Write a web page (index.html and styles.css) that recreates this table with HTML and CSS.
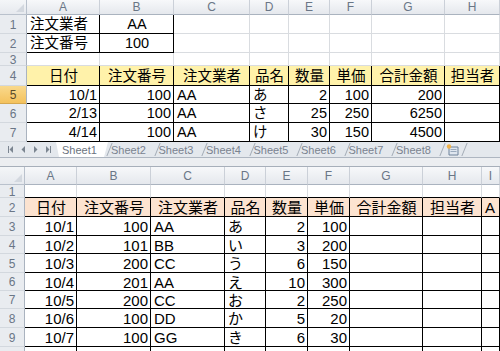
FILE: index.html
```html
<!DOCTYPE html>
<html lang="ja">
<head>
<meta charset="utf-8">
<title>Excel sheets</title>
<link rel="stylesheet" href="styles.css">
</head>
<body>
<div class="sheet top">
  <div class="corner"></div><div class="ch">A</div><div class="ch">B</div><div class="ch">C</div><div class="ch">D</div><div class="ch">E</div><div class="ch">F</div><div class="ch">G</div><div class="ch">H</div>

  <div class="rh">1</div><div class="c k">注文業者</div><div class="c k m">AA</div><div class="c"></div><div class="c"></div><div class="c"></div><div class="c"></div><div class="c"></div><div class="c"></div>

  <div class="rh">2</div><div class="c k">注文番号</div><div class="c k m">100</div><div class="c"></div><div class="c"></div><div class="c"></div><div class="c"></div><div class="c"></div><div class="c"></div>

  <div class="rh">3</div><div class="c"></div><div class="c"></div><div class="c"></div><div class="c"></div><div class="c"></div><div class="c"></div><div class="c"></div><div class="c"></div>

  <div class="rh">4</div><div class="c k y m">日付</div><div class="c k y m">注文番号</div><div class="c k y m">注文業者</div><div class="c k y m">品名</div><div class="c k y m">数量</div><div class="c k y m">単価</div><div class="c k y m">合計金額</div><div class="c k y m">担当者</div>

  <div class="rh sel">5</div><div class="c k r">10/1</div><div class="c k r">100</div><div class="c k">AA</div><div class="c k">あ</div><div class="c k r">2</div><div class="c k r">100</div><div class="c k r">200</div><div class="c k"></div>

  <div class="rh">6</div><div class="c k r">2/13</div><div class="c k r">100</div><div class="c k">AA</div><div class="c k">さ</div><div class="c k r">25</div><div class="c k r">250</div><div class="c k r">6250</div><div class="c k"></div>

  <div class="rh">7</div><div class="c k r">4/14</div><div class="c k r">100</div><div class="c k">AA</div><div class="c k">け</div><div class="c k r">30</div><div class="c k r">150</div><div class="c k r">4500</div><div class="c k"></div>
</div>

<div class="tabbar">
  <div class="nav">
    <svg width="56" height="15" viewBox="0 0 56 15">
      <g fill="#7b8591">
        <rect x="8" y="4" width="1" height="7"/>
        <path d="M13 4 L9.5 7.5 L13 11 Z"/>
        <path d="M25 4 L21.5 7.5 L25 11 Z"/>
        <path d="M34 4 L37.5 7.5 L34 11 Z"/>
        <path d="M46 4 L49.5 7.5 L46 11 Z"/>
        <rect x="50" y="4" width="1" height="7"/>
      </g>
    </svg>
  </div>
  <div class="tab active">Sheet1</div>
  <div class="tab">Sheet2</div>
  <div class="tab">Sheet3</div>
  <div class="tab">Sheet4</div>
  <div class="tab">Sheet5</div>
  <div class="tab">Sheet6</div>
  <div class="tab">Sheet7</div>
  <div class="tab">Sheet8</div>
  <div class="tab newtab">
    <svg width="14" height="12" viewBox="0 0 14 12">
      <path d="M3 3 H12 V11 H3 Z" fill="#dfe6ef" stroke="#6f829a" stroke-width="1"/>
      <path d="M4.5 5.5 H10.5 M4.5 7.5 H10.5" stroke="#9aaabd" stroke-width="1"/>
      <circle cx="3" cy="2.5" r="2.2" fill="#f0b24a"/>
    </svg>
  </div>
  <div class="tab endtab"></div>
</div>

<div class="gap"></div>

<div class="sheet bottom">
  <div class="corner"></div><div class="ch">A</div><div class="ch">B</div><div class="ch">C</div><div class="ch">D</div><div class="ch">E</div><div class="ch">F</div><div class="ch">G</div><div class="ch">H</div><div class="ch">I</div>

  <div class="rh">1</div><div class="c kb"></div><div class="c kb"></div><div class="c kb"></div><div class="c kb"></div><div class="c kb"></div><div class="c kb"></div><div class="c kb"></div><div class="c kb"></div><div class="c kb"></div>

  <div class="rh">2</div><div class="c k p m">日付</div><div class="c k p m">注文番号</div><div class="c k p m">注文業者</div><div class="c k p m">品名</div><div class="c k p m">数量</div><div class="c k p m">単価</div><div class="c k p m">合計金額</div><div class="c k p m">担当者</div><div class="c k p">A</div>

  <div class="rh">3</div><div class="c k r">10/1</div><div class="c k r">100</div><div class="c k">AA</div><div class="c k">あ</div><div class="c k r">2</div><div class="c k r">100</div><div class="c k"></div><div class="c k"></div><div class="c k"></div>

  <div class="rh">4</div><div class="c k r">10/2</div><div class="c k r">101</div><div class="c k">BB</div><div class="c k">い</div><div class="c k r">3</div><div class="c k r">200</div><div class="c k"></div><div class="c k"></div><div class="c k"></div>

  <div class="rh">5</div><div class="c k r">10/3</div><div class="c k r">200</div><div class="c k">CC</div><div class="c k">う</div><div class="c k r">6</div><div class="c k r">150</div><div class="c k"></div><div class="c k"></div><div class="c k"></div>

  <div class="rh">6</div><div class="c k r">10/4</div><div class="c k r">201</div><div class="c k">AA</div><div class="c k">え</div><div class="c k r">10</div><div class="c k r">300</div><div class="c k"></div><div class="c k"></div><div class="c k"></div>

  <div class="rh">7</div><div class="c k r">10/5</div><div class="c k r">200</div><div class="c k">CC</div><div class="c k">お</div><div class="c k r">2</div><div class="c k r">250</div><div class="c k"></div><div class="c k"></div><div class="c k"></div>

  <div class="rh">8</div><div class="c k r">10/6</div><div class="c k r">100</div><div class="c k">DD</div><div class="c k">か</div><div class="c k r">5</div><div class="c k r">20</div><div class="c k"></div><div class="c k"></div><div class="c k"></div>

  <div class="rh">9</div><div class="c k r">10/7</div><div class="c k r">100</div><div class="c k">GG</div><div class="c k">き</div><div class="c k r">6</div><div class="c k r">30</div><div class="c k"></div><div class="c k"></div><div class="c k"></div>

  <div class="rh"></div><div class="c k"></div><div class="c k"></div><div class="c k"></div><div class="c k"></div><div class="c k"></div><div class="c k"></div><div class="c k"></div><div class="c k"></div><div class="c k"></div>
</div>
</body>
</html>
```

FILE: styles.css
```css
html, body {
  margin: 0;
  padding: 0;
  background: #ffffff;
}
body {
  width: 500px;
  height: 351px;
  overflow: hidden;
  font-family: "Liberation Sans", "Noto Sans CJK JP", sans-serif;
  color: #000;
}

.sheet {
  display: grid;
  width: 500px;
  overflow: hidden;
}
.sheet > div {
  box-sizing: border-box;
  min-width: 0;
  overflow: hidden;
  white-space: nowrap;
}
.top {
  grid-template-columns: 27px 73px 74px 76px 39px 41px 42px 73px 55px;
  grid-template-rows: 15px 19px 19px 13px 20px 18px 19px 19px;
  font-size: 14.5px;
}
.bottom {
  grid-template-columns: 25px 52px 74px 74px 41px 42px 42px 73px 59px 18px;
  grid-template-rows: 18px 13px 19px 19px 18px 19px 18px 18px 19px 19px 20px;
  font-size: 15px;
  height: 184px;
}

.corner {
  background: linear-gradient(#f4f6f8, #e6e9ee);
  border-right: 1px solid #b9c1cc;
  border-bottom: 1px solid #b9c1cc;
  position: relative;
}
.corner::after {
  content: "";
  position: absolute;
  right: 2px;
  bottom: 2px;
  width: 0;
  height: 0;
  border-left: 8px solid transparent;
  border-bottom: 8px solid #d3d8df;
}

.ch {
  background: linear-gradient(#f7f8fa, #e5e8ed);
  border-right: 1px solid #cbd0d8;
  border-bottom: 1px solid #aab3bf;
  color: #6a7686;
  font-size: 12px;
  display: flex;
  align-items: center;
  justify-content: center;
}
.rh {
  background: #e9ecf0;
  border-right: 1px solid #aab3bf;
  border-bottom: 1px solid #d3d8de;
  color: #6a7686;
  font-size: 12px;
  display: flex;
  align-items: center;
  justify-content: center;
  padding-top: 1px;
}
.rh.sel {
  background: linear-gradient(#f9d98c, #f4c25d);
  color: #5a4a2a;
  border-bottom-color: #d5a850;
}

.c {
  border-right: 1px solid #d9dce0;
  border-bottom: 1px solid #d9dce0;
  padding: 1px 2px 0 3px;
  display: flex;
  align-items: center;
  line-height: 1;
}
.k {
  border-right-color: #000;
  border-bottom-color: #000;
}
.kb {
  border-bottom-color: #000;
}
.r { justify-content: flex-end; }
.m { justify-content: center; }
.y { background: #fff2aa; }
.p { background: #fce3d0; }

.tabbar {
  height: 16px;
  box-sizing: border-box;
  background: #e4e8ed;
  border-bottom: 1px solid #aeb6c1;
  display: flex;
  align-items: stretch;
  font-size: 11px;
  color: #7a8390;
}
.nav {
  width: 56px;
  flex: none;
  display: flex;
  align-items: center;
}
.nav svg { display: block; }
.tab {
  flex: none;
  width: 47.5px;
  box-sizing: border-box;
  padding-left: 3px;
  position: relative;
  display: flex;
  align-items: center;
}
.tab::before {
  content: "";
  position: absolute;
  left: 1px;
  top: 1px;
  bottom: 1px;
  width: 1px;
  background: #a3abb6;
  transform: skewX(-22deg);
}
.tab.active {
  width: 52px;
  padding-left: 6px;
  background: #ffffff;
  color: #6b7380;
  clip-path: polygon(0 0, 100% 0, calc(100% - 4px) 100%, 3px 100%);
}
.tab.active::before { display: none; }
.newtab {
  width: 22px;
  padding-left: 5px;
}
.endtab {
  width: 10px;
}

.gap {
  height: 9px;
  box-sizing: border-box;
  background: #eceef1;
  border-bottom: 1px solid #a7afba;
}
```
